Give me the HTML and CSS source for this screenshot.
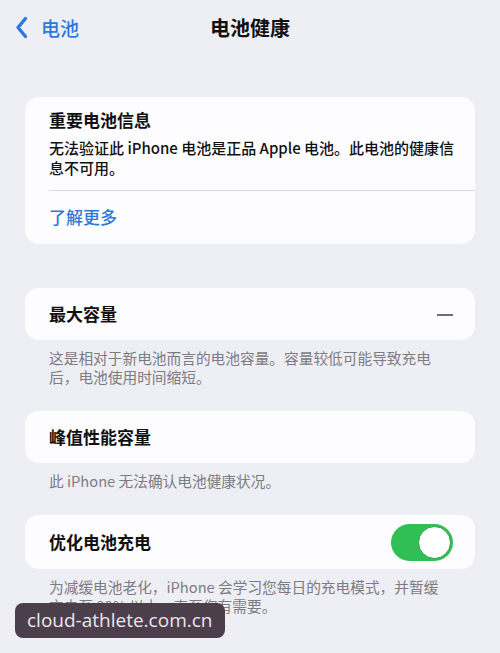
FILE: index.html
```html
<!DOCTYPE html>
<html lang="zh-CN">
<head>
    <meta charset="UTF-8">
    <title>电池健康</title>
    <link rel="stylesheet" href="styles.css">
</head>
<body>
<div class="nav">
    <div class="back">
        <svg class="chev" width="13" height="23" viewBox="0 0 13 23">
            <path d="M10.5 2.5 L3 11.5 L10.5 20.5" fill="none" stroke="#2a78e0" stroke-width="3.4" stroke-linecap="round" stroke-linejoin="round"/>
        </svg>
        <span>电池</span>
    </div>
    <div class="title">电池健康</div>
</div>

<div class="page">
    <div class="card info">
        <div class="card-title">重要电池信息</div>
        <p class="info-text">无法验证此 iPhone 电池是正品 Apple 电池。此电池的健康信息不可用。</p>
        <div class="divider"></div>
        <div class="link">了解更多</div>
    </div>

    <div class="card row first">
        <span class="card-title">最大容量</span>
        <span class="dash"></span>
    </div>
    <p class="note">这是相对于新电池而言的电池容量。容量较低可能导致充电后，电池使用时间缩短。</p>

    <div class="card row">
        <span class="card-title">峰值性能容量</span>
    </div>
    <p class="note">此 iPhone 无法确认电池健康状况。</p>

    <div class="card row toggle-row">
        <span class="card-title">优化电池充电</span>
        <span class="switch"><span class="knob"></span></span>
    </div>
    <p class="note">为减缓电池老化，iPhone 会学习您每日的充电模式，并暂缓充电至 80% 以上，直至您有需要。</p>
</div>

<div class="mark">cloud-athlete.com.cn</div>
</body>
</html>
```

FILE: styles.css
```css
*{
    margin: 0;
    padding: 0;
    box-sizing: border-box;
}
body{
    width: 500px;
    height: 653px;
    overflow: hidden;
    background: #eeeef5;
    font-family: "Noto Sans CJK SC", "Noto Sans", sans-serif;
    color: #111;
    position: relative;
}
.nav{
    height: 55px;
    position: relative;
    display: flex;
    align-items: center;
    justify-content: center;
}
.back{
    position: absolute;
    left: 15px;
    top: 14px;
    display: flex;
    align-items: center;
    gap: 13px;
    color: #2a78e0;
    font-size: 19px;
    font-weight: 500;
}
.title{
    font-size: 20px;
    font-weight: 600;
}
.page{
    padding: 42px 25px 0;
}
.card{
    background: #fdfdff;
    border-radius: 14px;
    padding-left: 24px;
}
.card-title{
    font-size: 17px;
    font-weight: 600;
    line-height: 22px;
}
.info{
    padding-top: 12px;
    padding-bottom: 16px;
}
.info-text{
    font-size: 15px;
    font-weight: 500;
    line-height: 20px;
    margin-top: 7px;
    padding-right: 12px;
}
.divider{
    height: 1px;
    background: #d9d9de;
    margin: 12px 0 15px;
}
.link{
    color: #2f78d6;
    font-size: 17px;
    font-weight: 500;
    line-height: 22px;
}
.row{
    height: 52px;
    display: flex;
    align-items: center;
    justify-content: space-between;
    padding-right: 22px;
}
.row.first{
    margin-top: 44px;
}
.dash{
    width: 16px;
    height: 2px;
    background: #6d6d72;
    margin-top: 2px;
}
.note{
    color: #7c7c82;
    font-size: 14.7px;
    line-height: 19px;
    padding: 8px 35px 25px 24px;
}
.toggle-row{
    height: 54px;
}
.switch{
    width: 62px;
    height: 37px;
    border-radius: 19px;
    background: #2fbf55;
    display: flex;
    align-items: center;
    justify-content: flex-end;
    padding-right: 2px;
}
.knob{
    width: 33px;
    height: 33px;
    border-radius: 50%;
    background: #fff;
    border: 1.5px solid #2a9e48;
}
.mark{
    position: absolute;
    left: 15px;
    top: 603px;
    width: 210px;
    height: 35px;
    border-radius: 8px;
    background: #4b3f4c;
    color: #ebe6ec;
    font-family: "Open Sans", sans-serif;
    font-size: 19px;
    line-height: 35px;
    padding-left: 12px;
}
```
